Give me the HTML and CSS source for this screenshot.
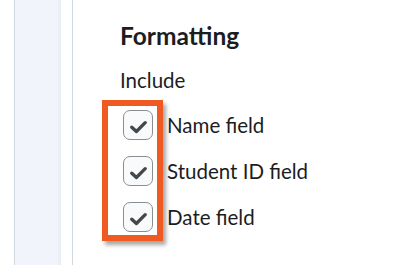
FILE: index.html
```html
<!DOCTYPE html>
<html lang="en">
<head>
  <meta charset="UTF-8">
  <title>Formatting</title>
  <link rel="stylesheet" href="styles.css">
</head>
<body>
  <div class="page">
    <div class="rail"></div>
    <div class="main">
      <h2 class="heading">Formatting</h2>
      <div class="label">Include</div>
      <div class="callout">
        <label class="option"><span class="box"><svg viewBox="0 0 17 19" width="17" height="19"><path d="M1.8 11.2l4.6 4.3 8.8-8.8" fill="none" stroke="#45484a" stroke-width="3.3" stroke-linecap="round" stroke-linejoin="round"/></svg></span>Name field</label>
        <label class="option"><span class="box"><svg viewBox="0 0 17 19" width="17" height="19"><path d="M1.8 11.2l4.6 4.3 8.8-8.8" fill="none" stroke="#45484a" stroke-width="3.3" stroke-linecap="round" stroke-linejoin="round"/></svg></span>Student ID field</label>
        <label class="option"><span class="box"><svg viewBox="0 0 17 19" width="17" height="19"><path d="M1.8 11.2l4.6 4.3 8.8-8.8" fill="none" stroke="#45484a" stroke-width="3.3" stroke-linecap="round" stroke-linejoin="round"/></svg></span>Date field</label>
      </div>
    </div>
  </div>
</body>
</html>
```

FILE: styles.css
```css
body {
  margin: 0;
  font-family: Lato, 'Open Sans', sans-serif;
  color: #1c1d1f;
  background: #fff;
}

.page {
  display: flex;
  height: 265px;
  overflow: hidden;
}

.rail {
  flex: none;
  margin-left: 14px;
  width: 46px;
  border-left: 1px solid #d1d7df;
  border-right: 11px solid #fff;
  background: #f1f5fb;
  box-shadow: inset -3px 0 0 #eaeff6;
}

.main {
  flex: 1;
  border-left: 1px solid #d1d7df;
  padding: 21px 0 0 47px;
}

.heading {
  margin: 0;
  font-size: 24.5px;
  font-weight: bold;
  line-height: 30px;
}

.label {
  margin-top: 17px;
  font-size: 20.5px;
  line-height: 24px;
}

.callout {
  display: flex;
  flex-direction: column;
  gap: 16px;
  margin: 8px 0 0 -18px;
  padding: 4px 4px 3px 15px;
  border: 6px solid #ef5a23;
  box-shadow: 3px 4px 4px rgba(0, 0, 0, 0.35);
  width: 30px;
  white-space: nowrap;
}

.option {
  display: flex;
  align-items: center;
  gap: 14px;
  height: 30px;
  font-size: 20.5px;
}

.box {
  flex: none;
  display: flex;
  align-items: center;
  justify-content: center;
  box-sizing: border-box;
  width: 30px;
  height: 30px;
  border: 1px solid #8b8e90;
  border-radius: 7px;
  background: #f9fafb;
}
```
